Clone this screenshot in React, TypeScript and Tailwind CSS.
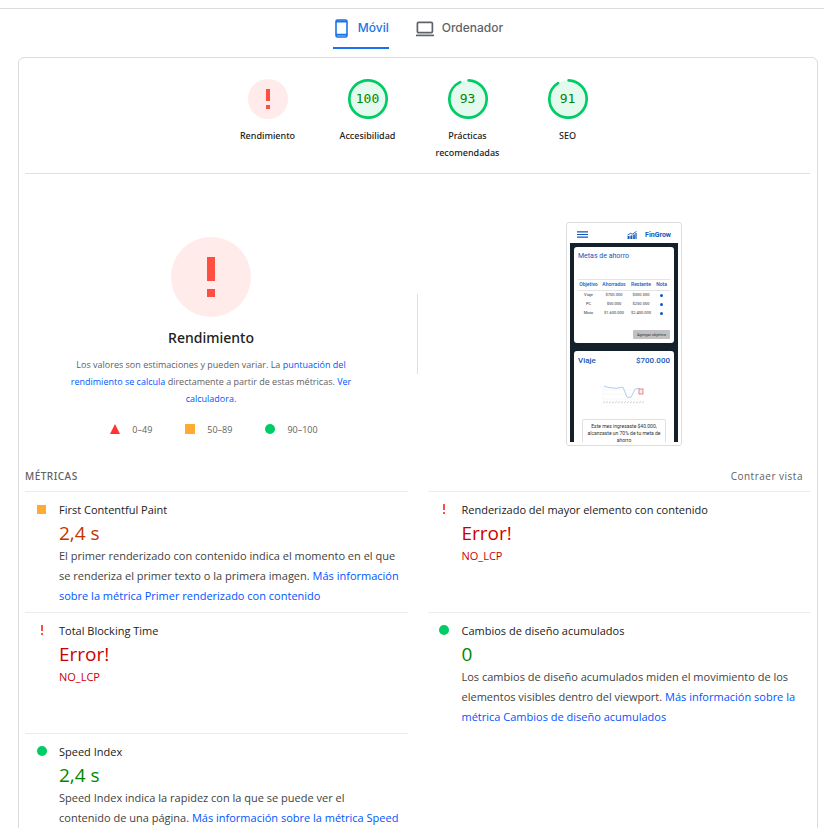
import React from "react";

type Rating = "pass" | "average" | "error";

type Metric = {
  title: string;
  value: string;
  rating: Rating;
  error?: string;
  text?: string;
  link?: string;
};

const metrics: Metric[] = [
  {
    title: "First Contentful Paint",
    value: "2,4 s",
    rating: "average",
    text: "El primer renderizado con contenido indica el momento en el que se renderiza el primer texto o la primera imagen.",
    link: "Más información sobre la métrica Primer renderizado con contenido",
  },
  {
    title: "Renderizado del mayor elemento con contenido",
    value: "Error!",
    rating: "error",
    error: "NO_LCP",
  },
  {
    title: "Total Blocking Time",
    value: "Error!",
    rating: "error",
    error: "NO_LCP",
  },
  {
    title: "Cambios de diseño acumulados",
    value: "0",
    rating: "pass",
    text: "Los cambios de diseño acumulados miden el movimiento de los elementos visibles dentro del viewport.",
    link: "Más información sobre la métrica Cambios de diseño acumulados",
  },
  {
    title: "Speed Index",
    value: "2,4 s",
    rating: "pass",
    text: "Speed Index indica la rapidez con la que se puede ver el contenido\u00a0de una página.",
    link: "Más información sobre la métrica Speed Index",
  },
];

const valueColor: Record<Rating, string> = {
  pass: "text-[#008800]",
  average: "text-[#c33300]",
  error: "text-[#cc0000]",
};

function Bang({ className }: { className: string }) {
  return (
    <svg viewBox="0 0 8 40" className={className} aria-hidden="true">
      <rect width="8" height="24" fill="#ff4e42" />
      <rect y="32" width="8" height="8" fill="#ff4e42" />
    </svg>
  );
}

function RatingMark({ rating }: { rating: Rating }) {
  if (rating === "pass") return <span className="size-[10px] rounded-full bg-[#00cc66]" />;
  if (rating === "average") return <span className="size-[9px] bg-[#ffaa33]" />;
  return <Bang className="h-[10px] w-[2px]" />;
}

function Gauge({ score, label }: { score?: number; label: string }) {
  const length = 2 * Math.PI * 56;
  const arc = score === 100 ? length : ((score ?? 0) / 100) * length - 4;
  return (
    <a href="#rendimiento" className="flex w-[100px] flex-col items-center">
      <span className="grid size-10 place-items-center">
        <svg viewBox="0 0 120 120" className="col-start-1 row-start-1 size-10" aria-hidden="true">
          {score === undefined ? (
            <circle cx="60" cy="60" r="60" fill="#ffebea" />
          ) : (
            <>
              <circle cx="60" cy="60" r="56" fill="#e5faef" />
              <circle
                cx="60"
                cy="60"
                r="56"
                fill="none"
                stroke="#00cc66"
                strokeWidth="8"
                strokeLinecap="round"
                strokeDasharray={`${arc} ${length}`}
                transform="rotate(-88 60 60)"
              />
            </>
          )}
        </svg>
        {score === undefined ? (
          <Bang className="col-start-1 row-start-1 h-5 w-1" />
        ) : (
          <span className="col-start-1 row-start-1 font-['DejaVu_Sans_Mono',monospace] text-[13px] leading-5 text-[#008800]">
            {score}
          </span>
        )}
      </span>
      <span className="mt-2 w-20 text-center font-['Noto_Sans',sans-serif] text-[9px] leading-[17px] font-medium text-[#212121]">
        {label}
      </span>
    </a>
  );
}

function Tabs() {
  return (
    <nav className="flex justify-center border-t border-[#dadce0] pt-[9px] pl-3 font-['Inter',sans-serif] text-[12px] leading-5 font-medium">
      <button className="flex h-[31px] items-start gap-[7px] border-b-2 border-[#1a73e8] text-[#1a73e8]">
        <svg viewBox="0 0 18 20" className="h-5 w-[18px]" aria-hidden="true">
          <rect x="3" y="2" width="11" height="17" rx="1.5" fill="none" stroke="#1a73e8" strokeWidth="1.6" />
          <path d="M3 3.6h11M3 16.8h11" stroke="#1a73e8" strokeWidth="2" />
        </svg>
        Móvil
      </button>
      <button className="ml-[26px] flex h-[31px] items-start gap-[7px] text-[#5f6368]">
        <svg viewBox="0 0 20 20" className="size-5" aria-hidden="true">
          <rect x="2.4" y="4.3" width="15" height="10.4" rx="1.2" fill="none" stroke="#5f6368" strokeWidth="1.7" />
          <path d="M1 17.4h18" stroke="#5f6368" strokeWidth="1.7" />
        </svg>
        Ordenador
      </button>
    </nav>
  );
}

const goals = [
  ["Viaje", "$700.000", "$300.000"],
  ["PC", "$50.000", "$250.000"],
  ["Moto", "$1.600.000", "$2.400.000"],
];

function Phone() {
  return (
    <figure className="w-[116px] rounded-[3px] border border-[#dddddd] bg-white p-[3px] font-['Roboto',sans-serif] text-[#333333]">
      <div className="flex h-[17px] items-center px-[7px] text-[#1258b8]">
        <svg viewBox="0 0 11 7" className="h-[7px] w-[11px]" aria-hidden="true">
          <path d="M0 .8h11M0 3.5h11M0 6.2h11" stroke="#1258b8" strokeWidth="1.2" />
        </svg>
        <svg viewBox="0 0 10 8" className="ml-auto h-2 w-[10px]" aria-hidden="true">
          <path d="M.6 8V5h2v3M3.400 8V4.500h2V8M6.200 8V3.600h1.600V8M8.400 8V2h1.200v6" fill="#1258b8" />
          <path d="M.5 4.200 3.500 2.300 5.500 3.100 9.500.4" fill="none" stroke="#1258b8" strokeWidth=".9" />
        </svg>
        <span className="ml-2 text-[7px] leading-[8px] font-bold">FinGrow</span>
      </div>
      <div className="h-[199px] overflow-hidden bg-[#14202a] px-1 pt-1">
        <section className="h-24 rounded-[3px] bg-white px-1 pt-[5px]">
          <h3 className="text-[7px] leading-[8px] text-[#1258b8]">Metas de ahorro</h3>
          <table className="mt-[19px] w-full table-fixed text-center text-[4px]">
            <thead>
              <tr className="h-[11px] border-y border-[#e4e4e4] text-[5px] text-[#1258b8]">
                <th className="w-[21px] font-medium">Objetivo</th>
                <th className="w-[30px] font-medium">Ahorrados</th>
                <th className="w-[24px] font-medium">Restante</th>
                <th className="font-medium">Nota</th>
              </tr>
            </thead>
            <tbody>
              {goals.map(([name, saved, left]) => (
                <tr key={name} className="h-[9px]">
                  <td>{name}</td>
                  <td>{saved}</td>
                  <td>{left}</td>
                  <td>
                    <span className="mx-auto block size-[3px] rounded-full bg-[#0b57d0]" />
                  </td>
                </tr>
              ))}
            </tbody>
          </table>
          <div className="mt-[12px] flex justify-end">
            <button className="h-[9px] w-[37px] rounded-[1px] bg-[#bfc1c3] text-[4px] leading-[9px]">
              Agregar objetivo
            </button>
          </div>
        </section>
        <section className="mt-2 h-24 rounded-t-[3px] bg-white px-1 pt-[5px]">
          <div className="flex justify-between text-[8px] leading-[10px] font-medium text-[#1258b8]">
            <h3>Viaje</h3>
            <span>$700.000</span>
          </div>
          <svg viewBox="0 0 46 22" className="mx-auto mt-[18px] h-[22px] w-[46px]" aria-hidden="true">
            <path d="M2 2v13M2 6h36M2 10h36M2 15h36" stroke="#ececec" strokeWidth=".5" fill="none" />
            <path
              d="M3 2l4 1.500 4 .3 4 .6 4-.8 3-.4 4 10h4l4-8 3-1 3 2"
              fill="none"
              stroke="#a5c6f0"
              strokeWidth=".9"
            />
            <path d="M2 19l2-1.500m1 1.500l2-1.500m1 1.500l2-1.500m1 1.500l2-1.500m1 1.500l2-1.500m1 1.500l2-1.500m1 1.500l2-1.500m1 1.500l2-1.500m1 1.500l2-1.500m1 1.500l2-1.500m1 1.500l2-1.500m1 1.500l2-1.500m1 1.500l2-1.500m1 1.500l2-1.500" stroke="#c4c4c4" strokeWidth=".8" />
            <rect x="38" y="5" width="4" height="5" fill="#fdeeee" stroke="#e05a5a" strokeWidth=".7" />
          </svg>
          <p className="mx-1 mt-[13px] h-9 rounded-[2px] border border-[#e0e0e0] pt-[3px] text-center text-[5px] leading-[7px]">
            Este mes ingresaste $40.000, alcanzaste un 70% de tu meta de ahorro
          </p>
        </section>
      </div>
    </figure>
  );
}

function Summary() {
  return (
    <section id="rendimiento" className="flex items-center gap-5 pt-12">
      <div className="flex flex-1 flex-col items-center pt-[6px] text-center">
        <span className="flex size-20 items-center justify-center rounded-full bg-[#ffebea]">
          <Bang className="h-10 w-2" />
        </span>
        <h2 className="mt-[11px] font-['Noto_Sans',sans-serif] text-[14px] leading-5 font-medium text-[#212121]">
          Rendimiento
        </h2>
        <p className="mt-2 w-[300px] text-[9px] leading-[17px] text-[#616161]">
          Los valores son estimaciones y pueden variar. La{" "}
          <a href="#calculo" className="text-[#0055ff]">puntuación del rendimiento se calcula</a>{" "}
          directamente a partir de estas métricas.{" "}
          <a href="#calculadora" className="text-[#0055ff]">Ver calculadora.</a>
        </p>
        <ul className="mt-[14px] ml-[6px] flex gap-[33px] text-[9px] leading-[17px] text-[#616161]">
          <li className="flex items-center gap-3">
            <svg viewBox="0 0 10 10" className="size-[10px]" aria-hidden="true">
              <path d="M5 0l5 10H0z" fill="#ff3333" />
            </svg>
            0–49
          </li>
          <li className="flex items-center gap-3">
            <span className="size-[10px] bg-[#ffaa33]" />
            50–89
          </li>
          <li className="flex items-center gap-3">
            <span className="size-[10px] rounded-full bg-[#00cc66]" />
            90–100
          </li>
        </ul>
      </div>
      <div className="h-20 w-px bg-[#e0e0e0]" />
      <div className="flex flex-1 justify-center">
        <Phone />
      </div>
    </section>
  );
}

function MetricRow({ metric }: { metric: Metric }) {
  return (
    <article className="flex min-h-[121px] border-t border-[#ebebeb] pt-2 pb-1 text-[11px] leading-5">
      <span className="flex h-[18px] w-[34px] shrink-0 items-center justify-center pr-px">
        <RatingMark rating={metric.rating} />
      </span>
      <div>
        <h4 className="text-[#212121]">{metric.title}</h4>
        <div className={`text-[19px] leading-[26px] ${valueColor[metric.rating]}`}>{metric.value}</div>
        {metric.error && <div className="text-[#cc0000]">{metric.error}</div>}
        {metric.text && (
          <p className="text-[#424242]">
            {metric.text}{" "}
            <a href="#metrica" className="text-[#0055ff]">{metric.link}</a>
          </p>
        )}
      </div>
    </article>
  );
}

export default function App() {
  return (
    <div className="h-screen overflow-hidden bg-white pt-2 font-['Open_Sans',sans-serif]">
      <Tabs />
      <main className="mr-[6px] ml-[18px] mt-2 rounded-md border border-[#dadce0] pt-[21px] pr-[7px] pl-[6px]">
        <header className="flex justify-center border-b border-[#e0e0e0] pb-3">
          <Gauge label="Rendimiento" />
          <Gauge score={100} label="Accesibilidad" />
          <Gauge score={93} label="Prácticas recomendadas" />
          <Gauge score={91} label="SEO" />
        </header>
        <Summary />
        <div className="mt-[22px] flex items-center justify-between pr-[7px] pb-[6px] text-[10px] leading-[17px] tracking-wider text-[#616161]">
          <h3 className="font-['Noto_Sans',sans-serif] font-medium">MÉTRICAS</h3>
          <button className="tracking-wider">Contraer vista</button>
        </div>
        <div className="grid grid-cols-2 gap-x-5">
          {metrics.map((metric) => (
            <MetricRow key={metric.title} metric={metric} />
          ))}
        </div>
      </main>
    </div>
  );
}
